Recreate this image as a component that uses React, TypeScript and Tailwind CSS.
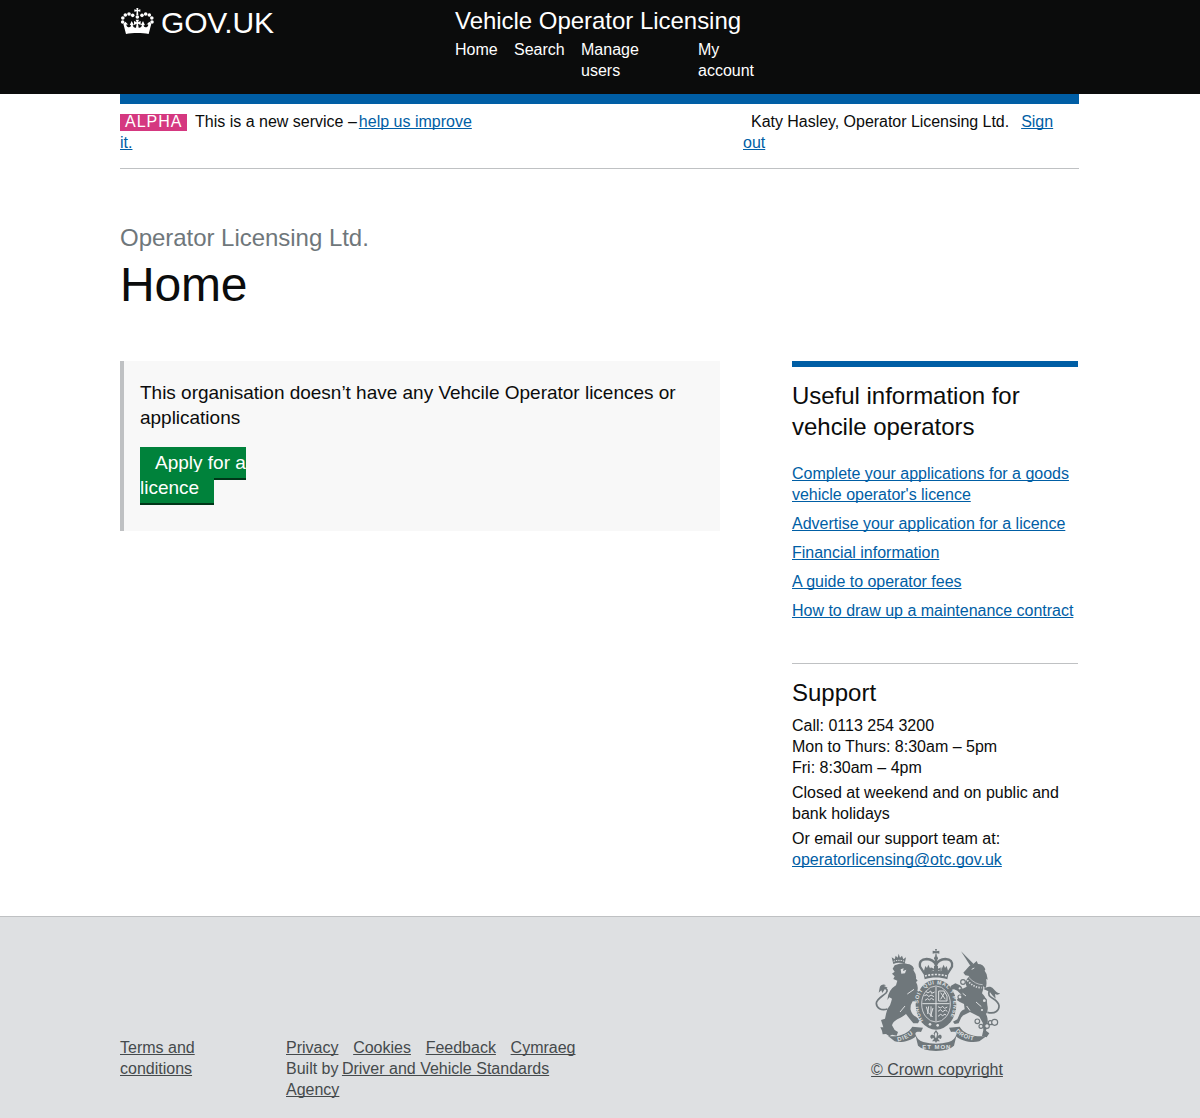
import React from "react";

const link = "text-[#005ea5] underline decoration-1 underline-offset-[1px] [text-decoration-skip-ink:none]";
const footLink = "text-[#454a4c] underline decoration-1 underline-offset-[1px] [text-decoration-skip-ink:none]";

function CrownLogo() {
  return (
    <svg className="mt-2 h-[26px] w-[35px] shrink-0" viewBox="30 24 105 78" fill="#fff" aria-hidden="true">
      <circle cx="38" cy="66" r="5.4" />
      <circle cx="38.500" cy="54" r="5.4" />
      <circle cx="46" cy="45" r="5.4" />
      <circle cx="57" cy="42" r="5.4" />
      <circle cx="68" cy="46" r="5.4" />
      <circle cx="126" cy="66" r="5.4" />
      <circle cx="125.500" cy="54" r="5.4" />
      <circle cx="118" cy="45" r="5.4" />
      <circle cx="107" cy="42" r="5.4" />
      <circle cx="96" cy="46" r="5.4" />
      <circle cx="82" cy="51" r="5.4" />
      <path d="M79 24h6l-1 6 7-2v7l-7-1 1 12h-6l1-12-7 1v-7l7 2z" />
      <path d="M77 59h10l-3 8 8-4v12l-8-4 2 12c6 1 9-3 10-8l-4 1 7-13 6 13-4-1c0 6 5 9 11 5 3-2 3-5 2-7l-5 1 9-9 6 6-8 31c-20-4-48-4-68 0l-8-31 6-6 9 9-5-1c-1 2-1 5 2 7 6 4 11 1 11-5l-4 1 6-13 7 13-4-1c1 5 4 9 10 8l2-12-8 4V63l8 4z" />
    </svg>
  );
}

function RoyalArms() {
  return (
    <svg className="h-[102px] w-[125px]" viewBox="45 27 375 306" fill="#6f777b" aria-hidden="true">
      {/* lion */}
      <path d="M100 72l-5-20 9 6 3-11 6 6 3-12 4 12 6-6 4 11 8-6-4 20c-11-5-23-5-34 0z" />
      <path d="M101 64c10-4 22-4 32 0" fill="none" stroke="#dee0e2" strokeWidth="3" strokeDasharray="4 3" />
      <path d="M104 76Q130 66 142 72Q156 72 162 86L160 90Q170 104 168 116L173 122L168 126Q176 140 172 152L184 158Q189 170 178 176L186 184L174 189Q166 182 158 184Q150 196 152 210Q156 226 168 230L179 240L174 250L160 250L150 238L138 222Q126 232 112 238Q98 246 96 256L104 270L114 276L110 287L96 284L88 289L78 282L68 283L66 272L61 262L70 262L63 240L75 236L78 222Q80 206 90 196Q94 184 96 176L88 172L82 180Q84 150 108 136L112 122L100 117L104 109L96 101L104 95L98 86Z" />
      <path d="M82 207c-18 6-33-3-33-17 0-14 19-21 29-31 7-8 3-13-8-16" fill="none" stroke="#6f777b" strokeWidth="5" />
      <path d="M59 143c2-8 12-12 19-7l-6 2 11 5-8 3-8 13-3-8-8 7z" />
      <path d="M122 88l9-3-2 8 10-4-4 11-11 1z" fill="#dee0e2" />
      <path d="M142 162l20-14M120 216l15-18" fill="none" stroke="#dee0e2" strokeWidth="3" />

      {/* unicorn */}
      <path d="M303 34l38 38-9 7z" />
      <path d="M310 98L328 78L340 72L350 63L354 72Q370 72 376 88L374 92Q384 104 382 120L378 116Q382 134 376 146L370 138Q370 150 366 160Q382 176 382 196Q386 212 378 222Q386 236 382 256L378 272L388 280L380 292L366 288L370 270L368 248L358 230L330 216L318 222Q306 226 302 236L296 250L284 252L279 245L292 238L298 224Q302 212 314 208L312 192Q298 186 290 180L304 164L292 152L282 148L272 150L272 138L286 130L300 136L308 146L320 140L316 128Q320 116 328 108L316 106Z" />
      <path d="M382 217c24 6 36-6 35-20-2-14-15-18-26-27-8-7-5-16 2-25" fill="none" stroke="#6f777b" strokeWidth="5" />
      <path d="M370 147c10-7 21-11 30-1 7 8 12 13 20 14-5 6-11 4-15 2l2 14-10-10-8-11z" />
      <path d="M326 112q20 22 42 22" fill="none" stroke="#dee0e2" strokeWidth="2" />
      <path d="M322 121q18 22 43 22" fill="none" stroke="#dee0e2" strokeWidth="5" strokeDasharray="4 4" />
      <path d="M335 88l8-4M308 160l10 8M330 212l-10-14M348 186l16 14" fill="none" stroke="#dee0e2" strokeWidth="3" />
      <g fill="#dee0e2" stroke="#6f777b" strokeWidth="3.500">
        <circle cx="309" cy="126" r="7" />
        <circle cx="299" cy="145" r="5" />
        <circle cx="300" cy="171" r="6" />
        <circle cx="373" cy="182" r="6" />
        <circle cx="366" cy="210" r="5" />
        <circle cx="352" cy="244" r="7" />
        <circle cx="363" cy="259" r="6" />
        <circle cx="381" cy="258" r="7" />
        <circle cx="391" cy="248" r="6" />
        <circle cx="404" cy="247" r="9" />
      </g>

      {/* crown */}
      <path d="M225 27h6l-2 7 9-2v9l-9-2 2 11h-6l2-11-9 2v-9l9 2z" />
      <circle cx="228" cy="55" r="6" />
      <path d="M193 100L180 80Q176 58 200 57Q220 58 228 74Q236 58 256 57Q280 58 276 80L263 100" fill="none" stroke="#6f777b" strokeWidth="7" />
      <path d="M224 60h8v34h-8zM212 82l10 4v-8h12v8l10-4v12l-10-3v8h-12v-8l-10 3zM192 92l4-14 5 6 4-10 5 11 4-2-1 16h-20zM264 92l-4-14-5 6-4-10-5 11-4-2 1 16h20z" />
      <path d="M190 98c22-8 54-8 76 0l-4 20c-20-7-48-7-68 0z" />
      <path d="M195 108c20-6 46-6 66 0" fill="none" stroke="#dee0e2" strokeWidth="5" strokeDasharray="6 4" />

      {/* garter and shield */}
      <ellipse cx="228" cy="194" rx="61" ry="75" />
      <ellipse cx="228" cy="192" rx="43" ry="54" fill="#6f777b" stroke="#dee0e2" strokeWidth="2.500" />
      <path id="garter-line" d="M190 241C160 201 175 133 228 133s68 68 35 110" fill="none" />
      <text fill="#dee0e2" fontFamily="Liberation Sans" fontWeight="700" fontSize="16">
        <textPath href="#garter-line" textLength="268" lengthAdjust="spacing">HONI SOIT QUI MAL Y PENSE</textPath>
      </text>
      <path d="M228 141v103M187 191h82" stroke="#dee0e2" strokeWidth="3" />
      <g fill="none" stroke="#dee0e2" strokeWidth="3">
        <path d="M197 154l7 5 8-6 3 7 9-4M193 167l8-3 5 6 7-5 9 5M195 181l8-5 5 4 6-5 8 5" />
        <path d="M234 200l8 4 5-5 7 6 8-4M234 214l7-5 7 6 8-5 6 4M234 229l8-6 6 4 7-5 3 4" />
        <path d="M236 153h16l9 15v15h-25zM242 158l14 20M254 157l-12 21" />
        <path d="M199 200l5 17 14 14M206 199l-3 23M213 199v32M219 204l-7 23" />
      </g>
      <circle cx="210" cy="253" r="4" fill="#dee0e2" />
      <circle cx="233" cy="256" r="4" fill="#dee0e2" />

      {/* fleur-de-lis and motto ribbon */}
      <path d="M228 270l7 10-2 10c3-8 12-7 12 0 0 5-3 7-6 7 0-4-3-5-5 0l6 7h-9l-3 5-3-5h-9l6-7c-2-5-5-4-5 0-4 0-7-4-6-8 2-6 10-6 13 1l-3-10z" />
      <path d="M228 276l3 6-2 11h-3l-2-11z" fill="#dee0e2" />
      <path d="M84 288C118 292 146 280 157 260L189 263L183 276C168 272 162 280 169 288C150 304 120 310 104 304Z" />
      <path d="M380 288C338 292 310 280 299 260L267 263L273 276C288 272 294 280 287 288C306 304 336 310 358 304Z" />
      <path d="M165 280Q170 300 190 306Q228 316 266 306Q286 300 291 280L282 317Q268 331 228 333Q188 331 174 317Z" />
      <path id="dieu-line" d="M113 304Q144 299 165 276" fill="none" />
      <path id="droit-line" d="M286 274Q308 298 348 302" fill="none" />
      <g fill="#dee0e2" fontFamily="Liberation Sans" fontWeight="700" fontSize="18">
        <text><textPath href="#dieu-line" textLength="52">DIEU</textPath></text>
        <text><textPath href="#droit-line" textLength="62">DROIT</textPath></text>
        <text x="187" y="327" textLength="84">ET MON</text>
      </g>
    </svg>
  );
}

function Header() {
  return (
    <header className="h-[94px] bg-[#0b0c0c] text-white">
      <div className="mx-auto flex w-[960px]">
        <div className="flex w-[335px] gap-[6px]">
          <CrownLogo />
          <span className="mt-[6px] text-[30px] leading-[34px] tracking-[-0.2px]">GOV.UK</span>
        </div>
        <div className="pt-[6px]">
          <div className="text-[24px] leading-[30px] tracking-[-0.03px]">Vehicle Operator Licensing</div>
          <nav className="mt-[3px] flex">
            <a className="w-[59px]">Home</a>
            <a className="w-[67px]">Search</a>
            <a className="w-[117px]">Manage<br />users</a>
            <a>My<br />account</a>
          </nav>
        </div>
      </div>
    </header>
  );
}

function PhaseBanner() {
  return (
    <div className="h-[75px] w-[959px] border-t-[10px] border-b border-t-[#005ea5] border-b-[#bfc1c3]">
      <div className="flex pt-[7px]">
        <p className="w-[623px]">
          <span className="mt-[3px] mr-2 inline-block h-[17px] w-[67px] bg-[#d53880] pl-[5px] align-top leading-[16px] tracking-[1px] text-white">ALPHA</span>
          <span className="mr-[2px]">This is a new service –</span><a className={link}>help us improve<br />it.</a>
        </p>
        <p>
          <span className="mr-3 ml-2 tracking-[-0.035px]">Katy Hasley, Operator Licensing Ltd.</span>
          <a className={link}>Sign<br />out</a>
        </p>
      </div>
    </div>
  );
}

function Sidebar() {
  return (
    <aside className="w-[286px] whitespace-nowrap border-t-[6px] border-[#005ea5]">
      <h2 className="mt-[13px] text-[24px] leading-[31px] tracking-[-0.02px]">Useful information for<br />vehcile operators</h2>
      <ul className="mt-[21px] flex flex-col gap-2 tracking-[-0.015px]">
        <li><a className={link}>Complete your applications for a goods<br />vehicle operator's licence</a></li>
        <li><a className={link}>Advertise your application for a licence</a></li>
        <li><a className={link}>Financial information</a></li>
        <li><a className={link}>A guide to operator fees</a></li>
        <li><a className={link}>How to draw up a maintenance contract</a></li>
      </ul>
      <section className="mt-[42px] border-t border-[#bfc1c3] pt-[14px]">
        <h2 className="text-[24px] leading-[30px]">Support</h2>
        <p className="mt-[7px]">Call: 0113 254 3200<br />Mon to Thurs: 8:30am – 5pm<br />Fri: 8:30am – 4pm</p>
        <p className="mt-1">Closed at weekend and on public and<br />bank holidays</p>
        <p className="mt-1">Or email our support team at:<br /><a className={link}>operatorlicensing@otc.gov.uk</a></p>
      </section>
    </aside>
  );
}

function Footer() {
  return (
    <footer className="mt-[46px] h-[202px] border-t border-[#bfc1c3] bg-[#dee0e2] text-[#454a4c]">
      <div className="mx-auto flex w-[960px]">
        <div className="w-[166px] pt-[120px]"><a className={footLink}>Terms and<br />conditions</a></div>
        <div className="w-[585px] pt-[120px]">
          <div className="flex gap-[14.7px]">
            <a className={footLink}>Privacy</a>
            <a className={footLink}>Cookies</a>
            <a className={footLink}>Feedback</a>
            <a className={footLink}>Cymraeg</a>
          </div>
          <p><span className="mr-[-1px]">Built by </span><a className={footLink}>Driver and Vehicle Standards<br />Agency</a></p>
        </div>
        <div className="flex w-[132px] flex-col items-center pt-8">
          <RoyalArms />
          <a className={"mt-2 whitespace-nowrap " + footLink}>© Crown copyright</a>
        </div>
      </div>
    </footer>
  );
}

export default function App() {
  return (
    <div className="min-h-[1118px] bg-white font-['Liberation_Sans',Arial,sans-serif] text-[16px] leading-[21px] text-[#0b0c0c]">
      <Header />
      <main className="mx-auto w-[960px]">
        <PhaseBanner />
        <div className="pt-[54px]">
          <p className="text-[24px] leading-[30px] tracking-[-0.03px] text-[#6f777b]">Operator Licensing Ltd.</p>
          <h1 className="mt-[7px] text-[48px] leading-[50px] tracking-[-0.2px]">Home</h1>
        </div>
        <div className="mt-[51px] flex items-start gap-[72px]">
          <section className="h-[170px] w-[600px] border-l-4 border-[#bfc1c3] bg-[#f8f8f8] pt-[19px] pl-4 text-[19px] leading-[25px]">
            <p className="tracking-[-0.015px]">This organisation doesn’t have any Vehcile Operator licences or<br />applications</p>
            <p className="mt-5">
              <a className="bg-[#00823b] px-[15px] py-[5px] text-white shadow-[0_2px_0_#003618]">Apply for a<br />licence</a>
            </p>
          </section>
          <Sidebar />
        </div>
      </main>
      <Footer />
    </div>
  );
}
